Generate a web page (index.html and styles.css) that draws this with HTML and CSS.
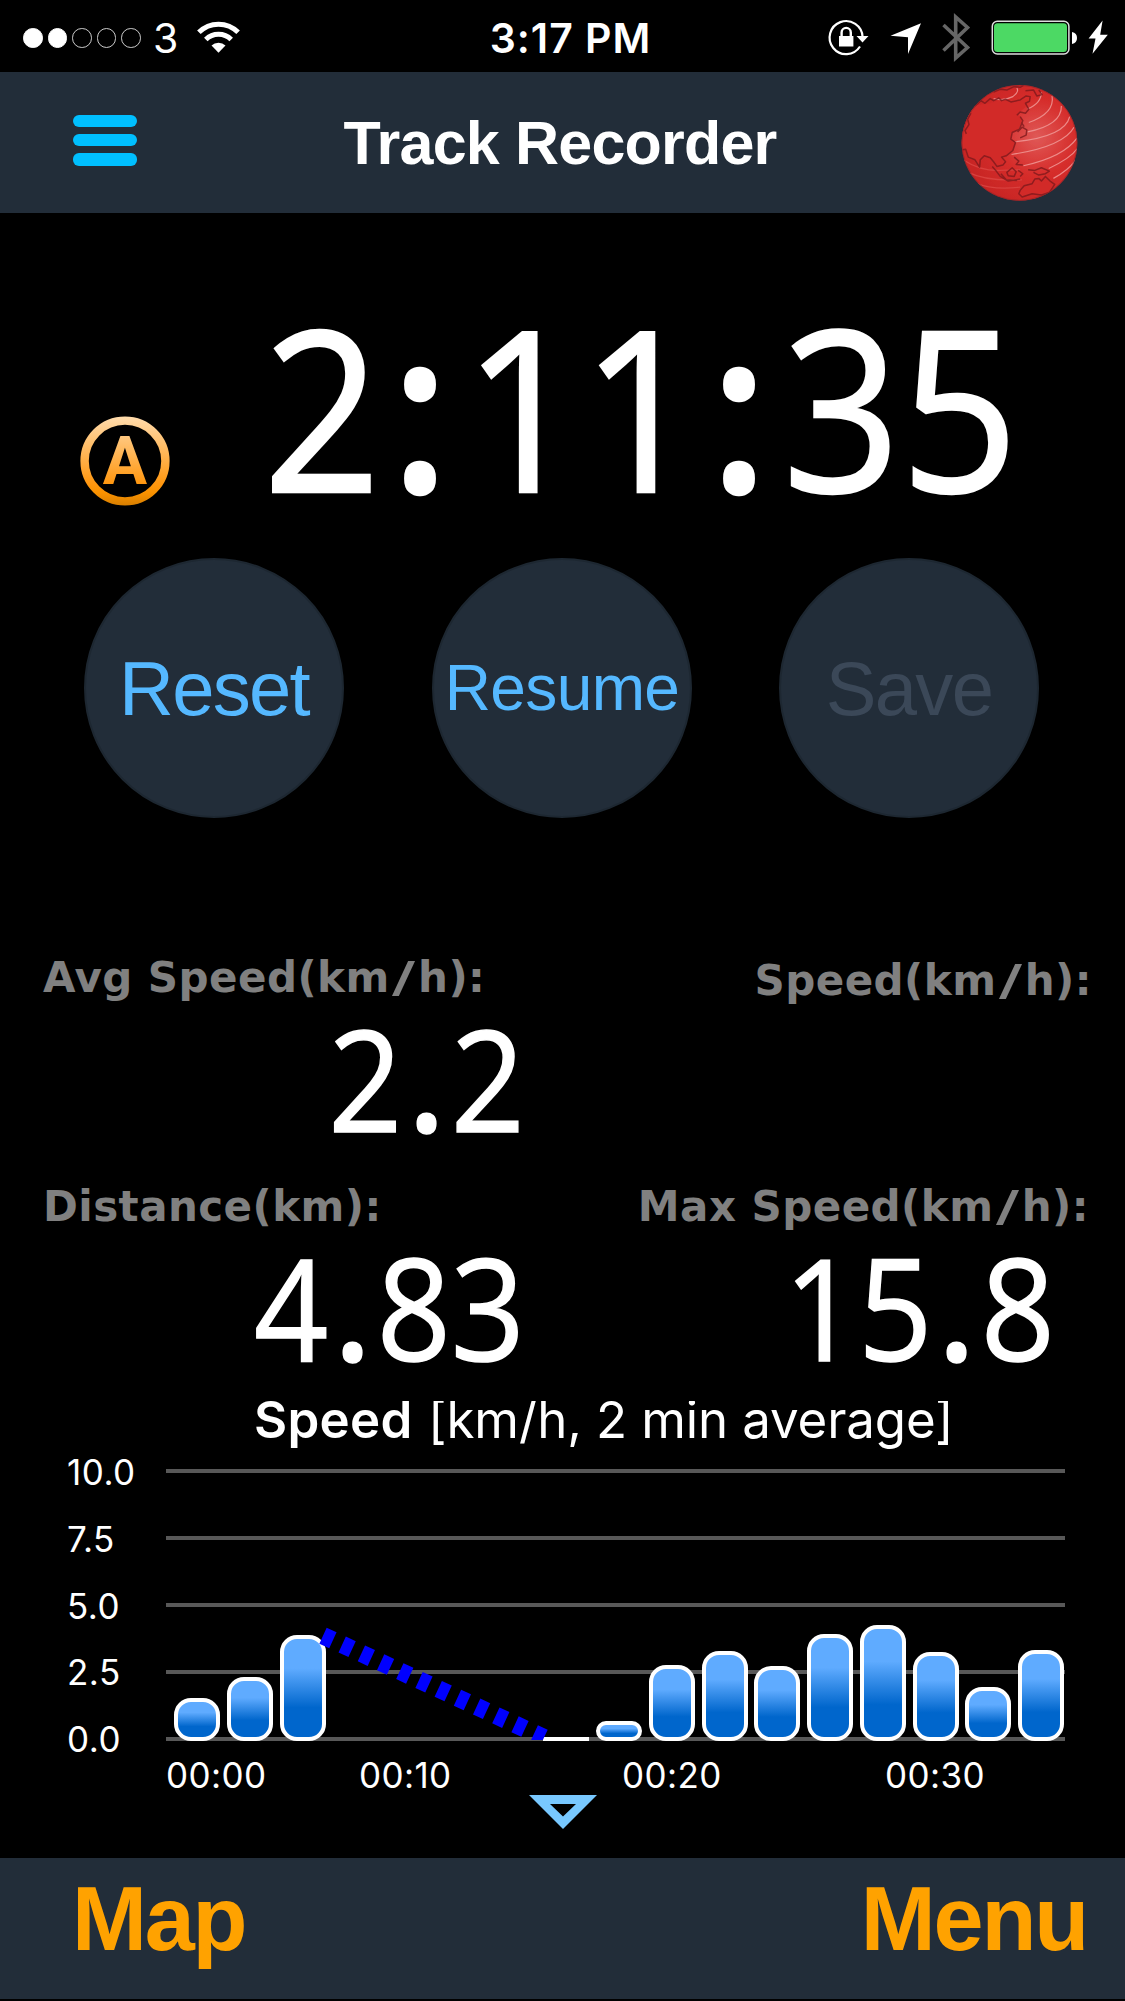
FILE: index.html
```html
<!DOCTYPE html>
<html lang="en">
<head>
  <meta charset="UTF-8">
  <meta name="viewport" content="width=device-width, initial-scale=1.0">
  <title>Track Recorder</title>
  <link rel="stylesheet" href="styles.css">
</head>
<body>
  <div class="status-bar">
    <div class="status-left">
      <div class="signal">
        <i class="dot on"></i><i class="dot on"></i><i class="dot"></i><i class="dot"></i><i class="dot"></i>
      </div>
      <span class="carrier">3</span>
      <svg class="wifi" viewBox="0 0 43 32" width="43" height="32">
        <g fill="none" stroke="#fff" stroke-width="5">
          <path d="M1.9 11.3A27.6 27.6 0 0 1 41.1 11.3"/>
          <path d="M8.8 18.5A18 18 0 0 1 34.2 18.5"/>
        </g>
        <path d="M14.5 24.5A10 10 0 0 1 28.5 24.5L21.5 31.7Z" fill="#fff"/>
      </svg>
    </div>
    <span class="clock">3:17 PM</span>
    <svg class="status-icons" viewBox="825 0 300 72" width="300" height="72">
      <g fill="none" stroke="#fff" stroke-width="2.2">
        <path d="M860 46.5A16.5 16.5 0 1 1 862.6 37"/>
        <path d="M841.6 37V32.5A4.6 4.6 0 0 1 850.8 32.5V37" stroke-width="2.4"/>
      </g>
      <path d="M839 36h14.4v10.6H839zM856.5 36h12l-6 6.4z" fill="#fff"/>
      <path d="M921 23.3L890.5 35.7L908 37.3V54Z" fill="#fff"/>
      <path d="M943.5 25L967.5 47.5L955.7 58V17L967.5 27.5L943.5 50.5" fill="none" stroke="#666" stroke-width="3.6"/>
      <rect x="992.3" y="21.3" width="76.6" height="32.6" rx="5" fill="none" stroke="#ddd" stroke-width="1.5"/>
      <rect x="994" y="23.3" width="73" height="28.8" rx="3.5" fill="#4cd964"/>
      <path d="M1072 32Q1077 33 1077 38T1072 44Z" fill="#fff"/>
      <path d="M1102.6 20.5L1088.6 38.5H1095.5L1092.5 53.7L1107.8 34.8H1100.2Z" fill="#fff"/>
    </svg>
  </div>

  <header class="header">
    <div class="hamburger"><i></i><i></i><i></i></div>
    <h1>Track Recorder</h1>
    <svg class="globe" viewBox="62 43 352 353" width="117" height="118">
      <defs>
        <radialGradient id="sea" cx="0.65" cy="0.45" r="0.6">
          <stop offset="0" stop-color="#e05a58"/>
          <stop offset="0.55" stop-color="#d62e2c"/>
          <stop offset="1" stop-color="#c92625"/>
        </radialGradient>
        <clipPath id="ball"><circle cx="238" cy="219" r="174"/></clipPath>
      </defs>
      <circle cx="238" cy="219" r="174" fill="url(#sea)"/>
      <g clip-path="url(#ball)">
        <g fill="none" stroke="#f09a98" stroke-width="3.6" opacity="0.85">
          <path d="M160 86Q190 94 218 80Q238 66 230 54"/>
          <path d="M262 117Q304 100 304 66"/>
          <path d="M266 158Q345 130 336 78"/>
          <path d="M262 186Q365 165 364 108"/>
          <path d="M224 216Q375 200 389 140"/>
          <path d="M214 254Q370 230 402 172"/>
          <path d="M250 288Q370 262 411 205"/>
          <path d="M326 296Q392 265 412 236"/>
          <path d="M340 326Q385 302 406 272"/>
        </g>
        <g fill="none" stroke="#d9413f" stroke-width="4">
          <path d="M72 272Q120 304 180 302T240 300"/>
          <path d="M84 308Q140 336 245 330"/>
          <path d="M106 340Q160 362 240 352"/>
        </g>
        <path d="M55 238L74 240L84 262L104 272L118 292L118 270L132 258L152 264L176 292L190 286L184 262L198 256L218 240L226 216L212 208L214 188L236 178L246 150L234 130L256 112L266 84L244 92L210 96L180 92L150 100L106 106L60 150Z" fill="#d32b29"/>
        <path d="M240 362L252 348L276 342L284 328L296 326L304 334L316 320L330 334L344 344L328 368L304 376L276 372L246 382L236 372Z" fill="#d32b29"/>
        <g fill="none" stroke="#7d191c" stroke-width="4.5" stroke-linejoin="round" opacity="0.8">
          <path d="M66 240L76 238L84 262L104 270L118 292L120 270L132 258L150 264L160 276L170 290L188 286L196 276L184 262L198 258L218 242L226 218L212 208L216 188L238 178L248 152L240 140"/>
          <path d="M104 108L122 92L134 100L150 86L160 92L176 84L184 92L196 88L212 96L240 90L258 78L270 80L268 94L256 100L266 118L256 130L240 126L230 136"/>
          <path d="M160 66L180 58L200 60L222 50L240 52L250 46M256 62L280 60L290 78L306 74L296 60"/>
          <path d="M92 130L82 148L86 164L74 182L78 192"/>
          <path d="M240 362L252 348L276 342L284 328L296 326L304 334L316 320L330 334L344 344L328 368L304 376L276 372L246 382L236 372Z"/>
          <path d="M156 290L168 304L180 320L204 334L240 328M182 312L198 330L230 332"/>
          <path d="M200 308L216 294L228 306L222 320L204 318ZM234 302L248 312L240 320M222 262L236 274L228 284L248 286"/>
          <path d="M264 300L284 302L304 294L328 304L316 312L296 316L280 308M232 186L246 172L260 180L258 196L240 204M244 158L252 170"/>
        </g>
      </g>
      <circle cx="238" cy="219" r="173" fill="none" stroke="#8e2226" stroke-width="3" opacity="0.6"/>
    </svg>
  </header>

  <main>
    <section class="timer">
      <svg class="auto-badge" viewBox="0 0 90 90" width="90" height="90">
        <defs>
          <linearGradient id="amber" gradientUnits="userSpaceOnUse" x1="0" y1="0" x2="0" y2="90">
            <stop offset="0" stop-color="#ffdcae"/>
            <stop offset="0.75" stop-color="#ff9710"/>
            <stop offset="0.85" stop-color="#fb9200"/>
            <stop offset="1" stop-color="#d67e00"/>
          </linearGradient>
        </defs>
        <circle cx="45" cy="45" r="40.4" fill="none" stroke="url(#amber)" stroke-width="8.4"/>
        <text class="auto-letter" x="45" y="67.5" text-anchor="middle" fill="url(#amber)">A</text>
      </svg>
      <div class="time">2<span class="colon">:</span>11<span class="colon">:</span>35</div>
    </section>

    <section class="buttons">
      <button class="round">Reset</button>
      <button class="round small">Resume</button>
      <button class="round" disabled>Save</button>
    </section>

    <section class="stats">
      <div class="stat">
        <div class="label">Avg Speed(km<i class="slash">/</i>h):</div>
        <div class="value">2<span class="point">.</span>2</div>
      </div>
      <div class="stat right current">
        <div class="label">Speed(km<i class="slash">/</i>h):</div>
      </div>
      <div class="stat">
        <div class="label">Distance(km):</div>
        <div class="value">4<span class="point">.</span>83</div>
      </div>
      <div class="stat right">
        <div class="label">Max Speed(km<i class="slash">/</i>h):</div>
        <div class="value">15<span class="point">.</span>8</div>
      </div>
    </section>

    <section class="chart">
      <div class="chart-title"><p><b>Speed</b> <span>[km/h, 2 min average]</span></p></div>
      <div class="chart-body">
        <div class="y-axis"><span>10.0</span><span>7.5</span><span>5.0</span><span>2.5</span><span>0.0</span></div>
        <div class="plot">
          <div class="grid-lines"><i></i><i></i><i></i><i></i><i></i></div>
          <div class="bars">
            <i style="height:43px"></i>
            <i style="height:64px"></i>
            <i style="height:106px"></i>
            <i class="none"></i>
            <i class="none"></i>
            <i class="none"></i>
            <i class="none"></i>
            <i class="flat" style="height:4px"></i>
            <i style="height:20px"></i>
            <i style="height:76px"></i>
            <i style="height:90px"></i>
            <i style="height:75px"></i>
            <i style="height:107px"></i>
            <i style="height:116px"></i>
            <i style="height:89px"></i>
            <i style="height:54px"></i>
            <i style="height:91px"></i>
          </div>
          <svg class="gap-line" viewBox="0 0 899 271" width="899" height="271">
            <path d="M157 166.7L378 268.6" fill="none" stroke="#00f" stroke-width="17.5" stroke-dasharray="10.9 10.25"/>
          </svg>
        </div>
      </div>
      <div class="x-axis"><span>00:00</span><span>00:10</span><span>00:20</span><span>00:30</span></div>
      <svg class="marker" viewBox="0 0 68 34" width="68" height="34">
        <path d="M0 0H68L34 34ZM21 9L34 21.5L47 9Z" fill="#78c8ff" fill-rule="evenodd"/>
      </svg>
    </section>
  </main>

  <footer class="footer">
    <a>Map</a>
    <a>Menu</a>
  </footer>
</body>
</html>
```
FILE: styles.css
```css
:root {
  --bar: #222d39;
  --blue: #55b8ff;
  --orange: #ffa200;
}
* {
  box-sizing: border-box;
}
body {
  margin: 0;
  width: 1125px;
  height: 2001px;
  overflow: hidden;
  display: flex;
  flex-direction: column;
  background: #000;
  color: #fff;
  font-family: "Liberation Sans", Arial, sans-serif;
}
svg {
  display: block;
}

/* status bar */
.status-bar {
  height: 72px;
  flex: none;
  display: grid;
  grid-template-columns: 300px 1fr 300px;
  align-items: start;
  font-family: Inter, sans-serif;
}
.status-left {
  display: flex;
  padding-left: 23px;
}
.signal {
  display: flex;
  gap: 5px;
  margin-top: 28px;
}
.dot {
  width: 19.6px;
  height: 19.6px;
  border: 1.5px solid #ccc;
  border-radius: 50%;
}
.dot.on {
  background: #fff;
  border-color: #fff;
}
.carrier {
  font-size: 41px;
  line-height: 41px;
  margin: 18px 0 0 12px;
  width: 26px;
}
.wifi {
  margin: 21px 0 0 18px;
}
.clock {
  font-size: 41px;
  line-height: 41px;
  font-weight: 600;
  letter-spacing: 1px;
  margin-top: 18px;
  padding-left: 16px;
  text-align: center;
}

/* header */
.header {
  height: 141px;
  flex: none;
  display: flex;
  align-items: flex-start;
  justify-content: space-between;
  background: var(--bar);
  padding: 0 47px 0 73px;
}
.hamburger {
  width: 64px;
  margin-top: 43px;
  display: flex;
  flex-direction: column;
  gap: 7px;
}
.hamburger i {
  height: 12.2px;
  border-radius: 6px;
  background: #00bfff;
}
h1 {
  margin: 37px 0 0 22px;
  font-size: 61px;
  line-height: 68px;
  font-weight: bold;
  letter-spacing: -0.8px;
  white-space: nowrap;
}
.globe {
  margin-top: 12px;
}

/* timer */
main {
  flex: 1;
}
.timer {
  height: 345px;
  display: flex;
  align-items: flex-start;
  padding-left: 80px;
}
.auto-badge {
  margin-top: 203px;
}
.auto-letter {
  font: bold 66px Roboto, sans-serif;
}
.time,
.value {
  font-family: "Open Sans", sans-serif;
  transform: scaleX(0.92);
  transform-origin: left;
  white-space: nowrap;
}
.time {
  margin: 80px 0 0 93px;
  font-size: 224px;
  line-height: 226px;
  -webkit-text-stroke: 2.5px #fff;
}
.colon {
  margin: 0 17px 0 12px;
  font-weight: 600;
}

/* buttons */
.buttons {
  display: flex;
  gap: 88px;
  padding-left: 84px;
}
.round {
  width: 260px;
  height: 260px;
  padding: 0;
  border: 2px solid #1d2731;
  border-radius: 50%;
  background: var(--bar);
  color: var(--blue);
  font: 76px "Liberation Sans", Arial, sans-serif;
  letter-spacing: -1.7px;
}
.round.small {
  font-size: 64px;
  letter-spacing: -0.6px;
}
.round:disabled {
  margin-left: -1px;
  color: #3b4858;
}

/* stats */
.stats {
  display: grid;
  grid-template-columns: 562px 563px;
  grid-template-rows: 229px 215px;
  margin-top: 139px;
}
.stat {
  padding: 0 37px 0 43px;
}
.label {
  font: bold 42px/42px "DejaVu Sans", Verdana, sans-serif;
  letter-spacing: 0.45px;
  color: #808080;
  white-space: nowrap;
}
.slash {
  display: inline-block;
  margin: 0 6.3px;
  font-style: normal;
  transform: scaleX(1.5);
}
.value {
  margin-top: 8px;
  font-size: 141px;
  line-height: 141px;
  transform-origin: right;
  text-align: right;
  -webkit-text-stroke: 1.5px #fff;
}
.point {
  margin: 0 7px;
  font-weight: 600;
}
.stat.right {
  padding-right: 36px;
  text-align: right;
}
.stat.right .value {
  margin-right: 34px;
}
.stat.current {
  padding-top: 3px;
  padding-right: 33px;
}

/* chart */
.chart {
  font-family: Inter, sans-serif;
}
.chart-title {
  height: 50px;
  overflow: hidden;
  padding-left: 254px;
}
.chart-title p {
  margin: -7px 0 0;
  font-size: 51px;
  line-height: 51px;
  white-space: nowrap;
}
.chart-title b {
  font-weight: 600;
  letter-spacing: 0.3px;
}
.chart-title span {
  margin-left: 1px;
  letter-spacing: -0.12px;
}
.chart-body {
  display: flex;
  margin-top: 18px;
  padding-left: 67px;
}
.y-axis {
  width: 99px;
  height: 302px;
  margin-top: -14px;
  display: flex;
  flex-direction: column;
  justify-content: space-between;
  font-size: 35px;
  line-height: 35px;
  letter-spacing: 0.5px;
}
.plot {
  width: 899px;
  height: 272px;
  display: grid;
}
.plot > * {
  grid-area: 1 / 1;
}
.grid-lines {
  display: flex;
  flex-direction: column;
  justify-content: space-between;
}
.grid-lines i {
  height: 4px;
  background: #585858;
}
.bars {
  display: flex;
  align-items: flex-end;
  gap: 6.75px;
  padding-left: 8px;
}
.bars i {
  width: 46px;
  flex: none;
  border: 4px solid #fff;
  border-radius: 17px;
  background: linear-gradient(#5fabff 30%, #0066cc 70%);
}
.bars .none {
  visibility: hidden;
}
.bars .flat {
  border-width: 2px;
  border-radius: 0;
}
.x-axis {
  display: flex;
  margin-top: 1px;
  padding-left: 166px;
  font-size: 35px;
  line-height: 35px;
  letter-spacing: 0.4px;
}
.x-axis span {
  width: 263px;
  flex: none;
}
.x-axis span:first-child {
  width: 193px;
}
.x-axis span:last-child {
  width: auto;
}
.marker {
  margin: 2px 0 0 529px;
}

/* footer */
.footer {
  flex: none;
  height: 141px;
  margin-bottom: 2px;
  display: flex;
  justify-content: space-between;
  padding: 9px 38px 0 72px;
  background: var(--bar);
  color: var(--orange);
  font-size: 90px;
  line-height: 104px;
  font-weight: bold;
  letter-spacing: -2.2px;
}
```
